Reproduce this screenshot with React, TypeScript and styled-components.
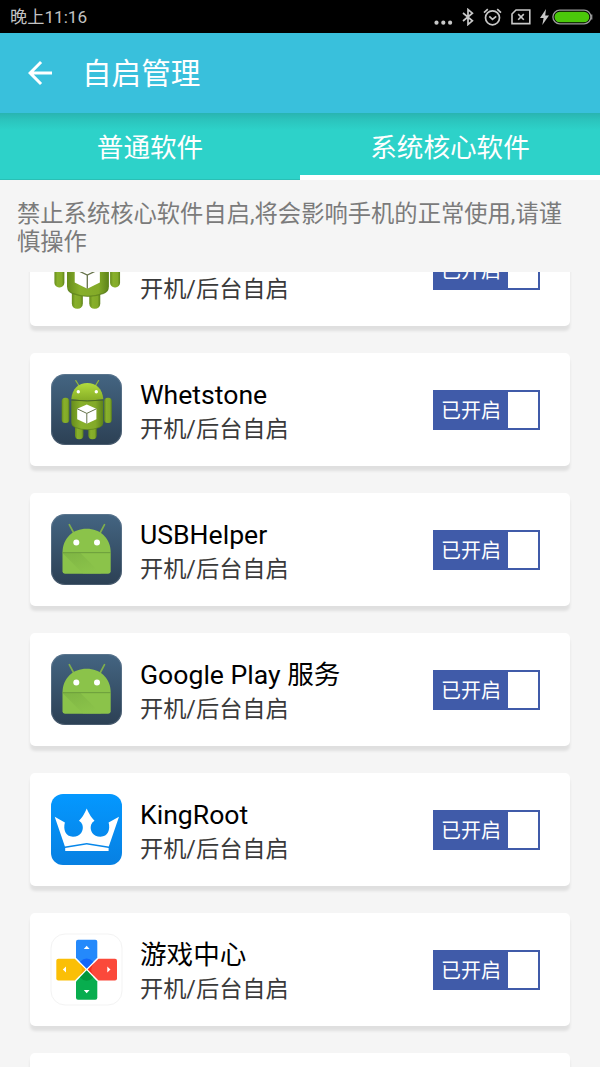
import React from 'react';
import styled, { createGlobalStyle } from 'styled-components';

const GlobalStyle = createGlobalStyle`
  * { box-sizing: border-box; }
  body {
    margin: 0;
    background: #f5f5f5;
    font-family: Roboto, "Noto Sans CJK SC", sans-serif;
  }
`;

const Screen = styled.div`
  display: flex;
  flex-direction: column;
  width: 600px;
  height: 1067px;
  overflow: hidden;
  background: #f5f5f5;
`;

const StatusBar = styled.div`
  display: flex;
  flex: none;
  align-items: center;
  justify-content: space-between;
  height: 33px;
  padding: 0 7px 0 10px;
  background: #000;
`;

const Clock = styled.span`
  color: #c3c3c3;
  font-size: 17.2px;
  line-height: 33px;
  padding-top: 1px;
  white-space: nowrap;
`;

const StatusIcons = styled.div`
  display: flex;
  align-items: center;
`;

const StatusGlyph = styled.svg<{ $gap?: number }>`
  display: block;
  margin-left: ${(p) => p.$gap ?? 0}px;
`;

const AppBar = styled.header`
  display: flex;
  flex: none;
  align-items: center;
  gap: 24px;
  height: 80px;
  padding-left: 22px;
  background: #39c0dc;
`;

const BackIcon = styled.svg`
  display: block;
  width: 36px;
  height: 36px;
`;

const PageTitle = styled.h1`
  margin: 0;
  padding-top: 3px;
  color: #fff;
  font-size: 29.6px;
  font-weight: 400;
  line-height: 77px;
`;

const Tabs = styled.nav`
  display: grid;
  flex: none;
  grid-template-columns: 1fr 1fr;
  height: 67px;
  background: linear-gradient(#29b4b1 0, #2bc4bd 7px, #2dd2c9 17px, #2dd2c9 100%);
`;

const Tab = styled.div<{ $active?: boolean }>`
  color: #fff;
  font-size: 26.6px;
  line-height: 70px;
  text-align: center;
  height: 67px;
  border-bottom: ${(p) => (p.$active ? '5px solid #fff' : '1px solid #2abfb5')};
`;

const Notice = styled.p`
  flex: none;
  height: 92px;
  margin: 0;
  padding: 21px 30px 0 17px;
  color: #7b7b7b;
  font-size: 23.3px;
  line-height: 27.5px;
`;

const List = styled.main`
  display: flex;
  flex: 1;
  flex-direction: column;
  justify-content: flex-start;
  gap: 27px;
  min-height: 0;
  padding: 0 30px;
  overflow: hidden;

  & > :first-child {
    margin-top: -59px;
  }
`;

const Card = styled.section`
  display: flex;
  flex: none;
  align-items: center;
  height: 113px;
  padding: 0 30px 0 21px;
  border-radius: 5px;
  background: #fff;
  box-shadow: 0 5px 3px rgba(0, 0, 0, 0.085);
`;

const AppIcon = styled.svg`
  display: block;
  flex: none;
  width: 71px;
  height: 71px;
  overflow: visible;
`;

const Labels = styled.div`
  flex: 1;
  margin-left: 18px;
  padding-top: 3px;
  white-space: nowrap;
`;

const Name = styled.div`
  height: 35px;
  color: #000;
  font-size: 26.6px;
  line-height: 35px;
`;

const Mode = styled.div`
  color: #3a3a3a;
  font-size: 23.2px;
  line-height: 34px;
`;

const Switch = styled.div`
  display: flex;
  width: 107px;
  height: 40px;
  border: 2px solid #405ba9;
  background: #fff;
`;

const SwitchLabel = styled.span`
  width: 73px;
  padding: 1px 0 0 6px;
  background: #405ba9;
  color: #fff;
  font-size: 20px;
  line-height: 35px;
  padding-top: 2px;
  height: 36px;
  overflow: visible;
  white-space: nowrap;
`;

function Robot({ id }: { id: string }) {
  return (
    <g>
      <defs>
        <linearGradient id={`${id}-body`} x1="0" x2="1">
          <stop offset="0" stopColor="#668c1c" />
          <stop offset="0.3" stopColor="#88b02b" />
          <stop offset="0.75" stopColor="#83aa28" />
          <stop offset="1" stopColor="#5c8219" />
        </linearGradient>
        <linearGradient id={`${id}-head`} x1="0" x2="0" y1="0" y2="1">
          <stop offset="0" stopColor="#b2dc3e" />
          <stop offset="1" stopColor="#86ad26" />
        </linearGradient>
      </defs>
      <path d="M24.8 6.6l3.4 5.4M47.6 6.6L44.2 12" stroke="#93b63a" strokeWidth="1.2" strokeLinecap="round" />
      <rect x="24" y="46" width="8.4" height="19.2" rx="4" fill={`url(#${id}-body)`} />
      <rect x="37.3" y="46" width="8.4" height="19.2" rx="4" fill={`url(#${id}-body)`} />
      <rect x="10.7" y="23.7" width="7.6" height="25.2" rx="3.5" fill={`url(#${id}-body)`} />
      <rect x="53.2" y="23.7" width="7.6" height="25.2" rx="3.5" fill={`url(#${id}-body)`} />
      <path d="M20.3 26.5h32V48q0 4-4 5.500-12 4.500-24 0-4-1.500-4-5.500z" fill={`url(#${id}-body)`} />
      <path d="M21 50.500q1 2 3.300 3 12 4.500 24 0 2.300-1 3.300-3" fill="none" stroke="#55781a" strokeOpacity="0.600" strokeWidth="1" />
      <path d="M20.3 25.2C21 14.500 28 9 36.300 9s15.300 5.500 16 16.200q-16 2-32 0z" fill={`url(#${id}-head)`} />
      <path d="M20.300 26q16 2 32 0" fill="none" stroke="#4d6b1d" strokeWidth="1" />
      <circle cx="27.300" cy="17.700" r="1.700" fill="#fff" />
      <circle cx="45.300" cy="17.700" r="1.700" fill="#fff" />
      <path d="M35.800 30.500l9.600 4.300v10.400l-9.600 4.600-9.600-4.600V34.800z" fill="#fff" />
      <path d="M26.200 34.800l9.600 4.600 9.600-4.600M35.800 39.400v10.400" fill="none" stroke="#66734a" strokeWidth="1" />
    </g>
  );
}

function NightTile({ id }: { id: string }) {
  return (
    <>
      <defs>
        <linearGradient id={`${id}-tile`} x1="0" x2="0" y1="0" y2="1">
          <stop offset="0" stopColor="#446582" />
          <stop offset="1" stopColor="#2c4054" />
        </linearGradient>
      </defs>
      <rect width="71" height="71" rx="14" fill={`url(#${id}-tile)`} />
      <rect x="0.500" y="0.500" width="70" height="70" rx="13.500" fill="none" stroke="#8495a5" strokeOpacity="0.350" />
    </>
  );
}

function PlainRobotIcon() {
  return (
    <AppIcon viewBox="0 0 71 71">
      <g transform="translate(-10.600 -10.600) scale(1.310)">
        <Robot id="plain" />
      </g>
    </AppIcon>
  );
}

function TileRobotIcon() {
  return (
    <AppIcon viewBox="0 0 71 71">
      <NightTile id="whet" />
      <Robot id="whet" />
    </AppIcon>
  );
}

function FlatRobotIcon({ id }: { id: string }) {
  return (
    <AppIcon viewBox="0 0 71 71">
      <NightTile id={id} />
      <defs>
        <linearGradient id={`${id}-fold`} x1="0" y1="0" x2="0.600" y2="1">
          <stop offset="0" stopColor="#6ca03a" />
          <stop offset="1" stopColor="#8bc34a" />
        </linearGradient>
      </defs>
      <path d="M18.300 10.700l4.700 8.800M53.500 10.700l-4.700 8.800" stroke="#7fae4b" strokeWidth="1.700" strokeLinecap="round" />
      <path d="M11.500 38.700C11.500 24 22 14.700 35.600 14.700S59.700 24 59.700 38.700z" fill="#8bc34a" />
      <path d="M11.500 38.700h48.200v18.600q0 2.400-2.400 2.400H13.900q-2.400 0-2.400-2.400z" fill="#8bc34a" />
      <path d="M11.500 39l20.700 20.700h18L29.500 39z" fill={`url(#${id}-fold)`} opacity="0.400" />
      <path d="M11.500 38.700h48.200" stroke="#6d9e39" strokeWidth="0.900" />
      <circle cx="25.300" cy="28.400" r="3" fill="#fff" />
      <circle cx="46" cy="28.400" r="3" fill="#fff" />
    </AppIcon>
  );
}

function CrownIcon() {
  return (
    <AppIcon viewBox="0 0 71 71">
      <defs>
        <linearGradient id="crown-tile" x1="0" x2="0" y1="0" y2="1">
          <stop offset="0" stopColor="#0498ff" />
          <stop offset="1" stopColor="#0780e2" />
        </linearGradient>
      </defs>
      <rect width="71" height="71" rx="12" fill="url(#crown-tile)" />
      <path
        d="M3.700 22.800L13.900 28.600C12 35.500 14.500 42.800 22 42.800C29.500 42.800 33.200 36.500 31.400 30.800Q30.600 28.400 28 26.800Q32.500 22.500 35.700 14.600Q39 22.500 43.500 26.800Q40.900 28.400 40.100 30.800C38.300 36.500 42 42.800 49.500 42.800C57 42.800 59.500 35.500 57.600 28.600L68 22.800L57.800 52.600L35.700 49L13.900 52.600Z"
        fill="#fff"
      />
      <path d="M14.200 54L35.700 50.400L57.600 54V57H14.200Z" fill="#fff" />
    </AppIcon>
  );
}

function GamePadIcon() {
  return (
    <AppIcon viewBox="0 0 71 71">
      <rect x="0" y="0" width="71" height="71" rx="14" fill="#fff" stroke="#f3f3f3" />
      <path d="M25 7.700q0-2 2-2h17.300q2 0 2 2v16L35.650 34.500 25 23.700z" fill="#2489fb" />
      <path d="M29 27.700q6.600-6.600 13.300 0l-6.650 6.800z" fill="#1166fa" />
      <path d="M7.300 24.700h16.500L34.500 35.500 23.800 46.400H7.300q-2 0-2-2V26.700q0-2 2-2z" fill="#fbbf06" />
      <path d="M28 28.900q6 6.600 0 13.200l6.500-6.600z" fill="#f6a803" />
      <path d="M64 24.700H47.500L36.800 35.500l10.700 10.900H64q2 0 2-2V26.700q0-2-2-2z" fill="#fb493a" />
      <path d="M43.300 28.900q-6 6.600 0 13.200l-6.500-6.600z" fill="#f3301f" />
      <path d="M25 63.700q0 2 2 2h17.300q2 0 2-2V47.400L35.650 36.600 25 47.400z" fill="#08ad4e" />
      <path d="M29 43.400q6.600 6.600 13.300 0l-6.650-6.800z" fill="#04973b" />
      <path
        d="M32.800 15l2.900-3.200 2.900 3.200zM32.800 56l2.900 3.200 2.900-3.200zM15 32.600l-3.200 2.900 3.200 2.900zM56.300 32.600l3.200 2.900-3.200 2.900z"
        fill="#fff"
      />
    </AppIcon>
  );
}

const apps = [
  { name: '', icon: <PlainRobotIcon /> },
  { name: 'Whetstone', icon: <TileRobotIcon /> },
  { name: 'USBHelper', icon: <FlatRobotIcon id="usb" /> },
  { name: 'Google Play 服务', icon: <FlatRobotIcon id="play" /> },
  { name: 'KingRoot', icon: <CrownIcon /> },
  { name: '游戏中心', icon: <GamePadIcon /> },
];

function StatusGlyphs() {
  return (
    <StatusIcons>
      <StatusGlyph width="19" height="32" viewBox="0 0 19 32" fill="#c8c8c8">
        <circle cx="2.500" cy="21.700" r="2.100" />
        <circle cx="9.300" cy="21.700" r="2.100" />
        <circle cx="16.100" cy="21.700" r="2.100" />
      </StatusGlyph>
      <StatusGlyph $gap={9} width="12" height="18" viewBox="0 0 12 18" fill="none" stroke="#c8c8c8" strokeWidth="1.700">
        <path d="M1 5l9.400 7.800L6 16.500v-15l4.400 3.700L1 13" />
      </StatusGlyph>
      <StatusGlyph $gap={9} width="19" height="18" viewBox="0 0 19 18" fill="none" stroke="#c8c8c8" strokeWidth="1.700">
        <circle cx="9.500" cy="9.800" r="7" />
        <path d="M6.300 8.300l3.200 3 3.700-3M1 4.600L4.800 1.200M18 4.600L14.200 1.200" />
      </StatusGlyph>
      <StatusGlyph $gap={8.500} width="20" height="16" viewBox="0 0 20 16" fill="none" stroke="#c8c8c8" strokeWidth="1.600">
        <path d="M5 1h13.800v13.600H1V5zM7.200 5.100l5.600 5.600M12.800 5.100l-5.600 5.600" />
      </StatusGlyph>
      <StatusGlyph $gap={9} width="9" height="16" viewBox="0 0 9 16" fill="#c8c8c8">
        <path d="M6 0L0 9h3.600L2.300 16 9 6.500H5.200z" />
      </StatusGlyph>
      <StatusGlyph $gap={3.500} width="41" height="16" viewBox="0 0 41 16">
        <rect x="0.900" y="1.200" width="38" height="13.600" rx="6.800" fill="#000" stroke="#9a9a9a" strokeWidth="1.300" />
        <path d="M39.700 5.500v5" stroke="#9a9a9a" strokeWidth="1.300" />
        <rect x="2.500" y="2.800" width="34.800" height="10.400" rx="5.200" fill="#4bc80a" />
      </StatusGlyph>
    </StatusIcons>
  );
}

export default function App() {
  return (
    <Screen>
      <GlobalStyle />
      <StatusBar>
        <Clock>晚上11:16</Clock>
        <StatusGlyphs />
      </StatusBar>
      <AppBar>
        <BackIcon viewBox="0 0 24 24" fill="#fff">
          <path d="M20 11H7.830l5.590-5.590L12 4l-8 8 8 8 1.410-1.410L7.830 13H20v-2z" />
        </BackIcon>
        <PageTitle>自启管理</PageTitle>
      </AppBar>
      <Tabs>
        <Tab>普通软件</Tab>
        <Tab $active>系统核心软件</Tab>
      </Tabs>
      <Notice>禁止系统核心软件自启,将会影响手机的正常使用,请谨慎操作</Notice>
      <List>
        {apps.map((app) => (
          <Card key={app.name}>
            {app.icon}
            <Labels>
              <Name>{app.name}</Name>
              <Mode>开机/后台自启</Mode>
            </Labels>
            <Switch>
              <SwitchLabel>已开启</SwitchLabel>
            </Switch>
          </Card>
        ))}
        <Card />
      </List>
    </Screen>
  );
}
